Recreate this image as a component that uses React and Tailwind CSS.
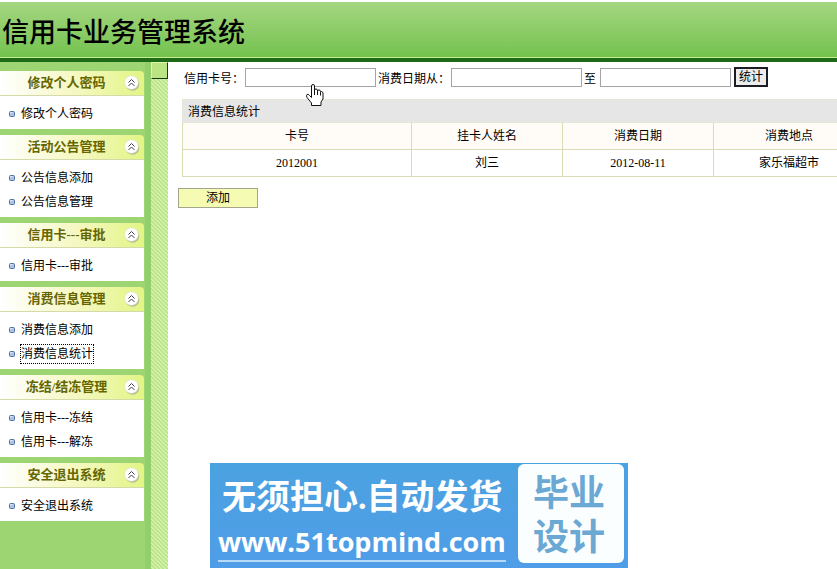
import { useState } from 'react'
import clsx from 'clsx'

const menus = [
  { title: '修改个人密码', items: ['修改个人密码'] },
  { title: '活动公告管理', items: ['公告信息添加', '公告信息管理'] },
  { title: '信用卡---审批', items: ['信用卡---审批'] },
  { title: '消费信息管理', items: ['消费信息添加', '消费信息统计'] },
  { title: '冻结/结冻管理', items: ['信用卡---冻结', '信用卡---解冻'] },
  { title: '安全退出系统', items: ['安全退出系统'] },
]

const columns = ['卡号', '挂卡人姓名', '消费日期', '消费地点']
const rows = [['2012001', '刘三', '2012-08-11', '家乐福超市']]

const CollapseIcon = () => (
  <svg width="16" height="16" viewBox="0 0 16 16" aria-hidden="true">
    <circle cx="8.5" cy="9" r="6.8" fill="#b3bd90" />
    <circle cx="7.5" cy="7.5" r="6.8" fill="#fff" stroke="#dfe3d0" strokeWidth="0.6" />
    <path d="M4.500 7.500 7.500 4.500 10.500 7.500M4.500 11 7.500 8 10.500 11" fill="none" stroke="#3c3f4a" />
  </svg>
)

const Bullet = () => (
  <svg width="6" height="6" viewBox="0 0 6 6" aria-hidden="true">
    <rect x="0.5" y="0.5" width="5" height="5" rx="1" fill="#a9c3e8" stroke="#566f9a" />
    <path d="M1.5 2.5v-1h2" fill="none" stroke="#e3eefb" />
  </svg>
)

const HandCursor = () => (
  <svg
    className="pointer-events-none absolute left-[306px] top-[84px]"
    width="18"
    height="22"
    viewBox="0 0 18 22"
    aria-hidden="true"
  >
    <path
      d="M5.500 12V2Q5.500 .5 7 .5T8.500 2V6Q8.500 5 10 5T11.500 6.500V7Q11.500 6 13 6T14.500 7.500V8.500Q14.500 7.500 15.500 7.500T17 9V15L15 18V21.500H5.500V19L1 13.500Q0 11.500 1 10.500T3.500 11.500L5.500 13.500Z"
      fill="#fff"
      stroke="#111"
    />
    <path d="M8.500 6v5M11.500 7v4M14.500 8.500v3" stroke="#111" />
  </svg>
)

const MenuGroup = ({ title, items, active, onSelect }) => {
  const [open, setOpen] = useState(true)

  return (
    <section>
      <button
        type="button"
        aria-expanded={open}
        onClick={() => setOpen(!open)}
        className="flex h-[25px] w-full items-center rounded-tr border-b border-[#d5dba8] bg-linear-to-r from-white via-[#f6f8c4] to-[#e2f584] pr-1 text-[13px] font-bold text-[#666600]"
      >
        <span className="flex-1 pl-[9px] text-center leading-6">{title}</span>
        <CollapseIcon />
      </button>
      {open && (
        <ul className="bg-white pb-[3px] pt-[6px]">
          {items.map((item) => (
            <li key={item} className="flex h-6 items-center gap-[6px] pl-[9px]">
              <Bullet />
              <a
                href="#"
                onClick={(e) => {
                  e.preventDefault()
                  onSelect(item)
                }}
                className={clsx(
                  'leading-[18px] text-black',
                  active === item && 'outline-1 outline-dotted outline-black',
                )}
              >
                {item}
              </a>
            </li>
          ))}
        </ul>
      )}
    </section>
  )
}

const SearchForm = () => {
  const input = 'h-[19px] w-[131px] border border-[#a5a5a5] bg-white px-1 outline-none'

  return (
    <form className="flex h-5 items-center whitespace-nowrap pl-1" onSubmit={(e) => e.preventDefault()}>
      <label htmlFor="card" className="w-[61px] pt-1">信用卡号：</label>
      <input id="card" type="text" className={input} />
      <label htmlFor="from" className="ml-[2px] w-[73px] pt-1">消费日期从：</label>
      <input id="from" type="text" className={input} />
      <label htmlFor="to" className="ml-[2px] w-4 pt-1">至</label>
      <input id="to" type="text" className={input} />
      <button type="submit" className="ml-[3px] h-5 w-[34px] border-2 border-[#1c1c24] bg-[#ececec] leading-4">
        统计
      </button>
    </form>
  )
}

const Banner = () => (
  <div className="absolute left-[210px] top-[463px] flex h-[105px] w-[418px] justify-between bg-linear-to-b from-[#4ba2e0] to-[#4f9de8] pb-[5px] pl-2 pr-1 pt-px">
    <div className="flex flex-col items-start whitespace-nowrap text-white">
      <p className="pl-1 pt-2 text-[34px] font-bold leading-[52px]">无须担心.自动发货</p>
      <a
        href="#"
        className="border-b-2 border-[#b5daf7] font-['Open_Sans',sans-serif] text-[27px] font-bold leading-[36px]"
      >
        www.51topmind.com
      </a>
    </div>
    <p className="flex w-[106px] shrink-0 flex-col justify-center rounded-md bg-[#fbfeff] pr-1 pt-1 text-center text-[36px] font-bold leading-[44px] text-[#6ba8d4]">
      <span>毕业</span>
      <span>设计</span>
    </p>
  </div>
)

export default function App() {
  const [active, setActive] = useState('消费信息统计')

  return (
    <div className="relative flex min-h-screen flex-col overflow-hidden bg-white font-['Liberation_Serif','Noto_Sans_CJK_SC',serif] text-xs text-black">
      <header className="mt-[2px] flex h-[60px] items-center border-b-4 border-[#1d6b16] bg-linear-to-b from-[#a5d681] to-[#72c24c] pl-[2px] shadow-[inset_0_-1px_0_#c5ed8f]">
        <h1 className="whitespace-nowrap pt-[6px] text-[27px] font-medium leading-9">信用卡业务管理系统</h1>
      </header>

      <div className="flex flex-1">
        <aside className="w-[151px] shrink-0 border-r-[6px] border-[#92cf6c] bg-[#9dd573] pr-px pt-[9px]">
          <nav className="flex flex-col gap-[6px]">
            {menus.map((menu) => (
              <MenuGroup key={menu.title} {...menu} active={active} onSelect={setActive} />
            ))}
          </nav>
        </aside>

        <div className="w-[17px] shrink-0 bg-[linear-gradient(45deg,#b9e38c_25%,#d6f2a6_25%_50%,#b9e38c_50%_75%,#d6f2a6_75%)] bg-size-[4px_4px]">
          <button
            type="button"
            aria-label="收起菜单"
            className="block h-[17px] w-full border border-b-[#17381a] border-l-[#dff5ae] border-r-[#17381a] border-t-[#dff5ae] bg-[#bbe582]"
          />
        </div>

        <main className="min-w-0 flex-1 overflow-hidden pl-3 pt-[5px]">
          <SearchForm />

          <table className="ml-[2px] mt-3 w-full min-w-[683px] table-fixed border-collapse">
            <colgroup>
              <col className="w-[229px]" />
              <col />
              <col />
              <col />
            </colgroup>
            <thead>
              <tr className="h-[23px] bg-[#e6e6e6]">
                <th colSpan={4} className="border border-[#e6e6d6] px-[5px] pb-0 pt-[2px] text-left font-normal">
                  消费信息统计
                </th>
              </tr>
              <tr className="h-[27px] bg-[#fffcf8]">
                {columns.map((name) => (
                  <th key={name} className="border border-[#dcdcb4] p-0 font-normal">{name}</th>
                ))}
              </tr>
            </thead>
            <tbody>
              {rows.map((row) => (
                <tr key={row[0]} className="h-[27px]">
                  {row.map((cell) => (
                    <td key={cell} className="border border-[#dcdcb4] p-0 text-center">{cell}</td>
                  ))}
                </tr>
              ))}
            </tbody>
          </table>

          <button
            type="button"
            className="-ml-[2px] mt-[11px] h-5 w-20 border border-[#a5a58c] bg-[#f6fbb4] leading-4"
          >
            添加
          </button>
        </main>
      </div>

      <HandCursor />
      <Banner />
    </div>
  )
}
